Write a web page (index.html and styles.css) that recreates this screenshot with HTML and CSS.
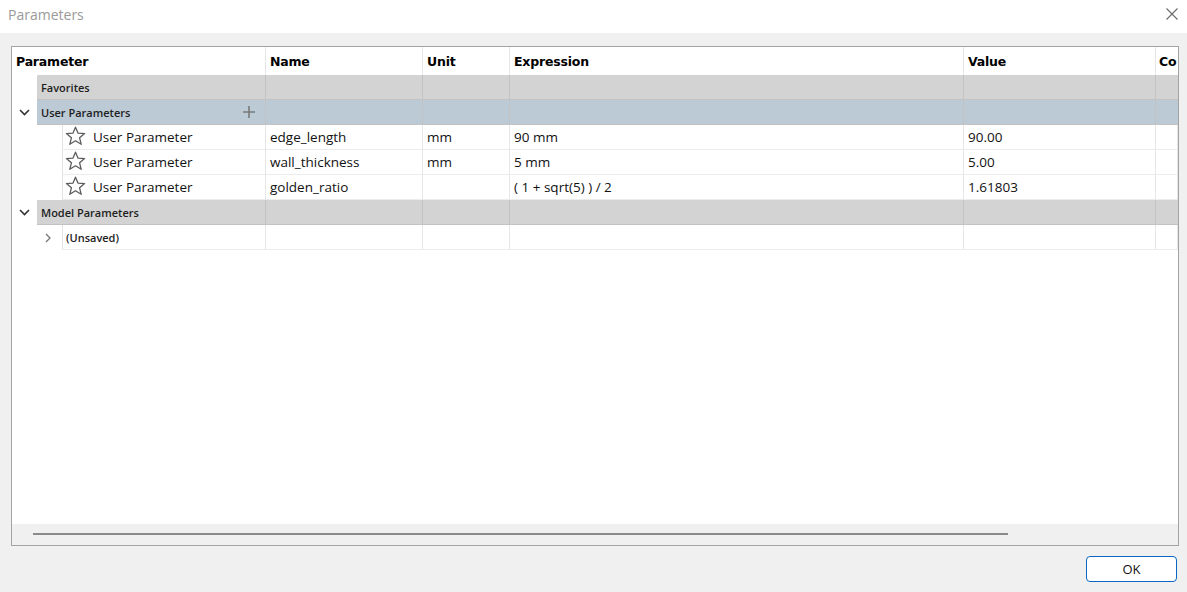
FILE: index.html
```html
<!DOCTYPE html>
<html>
<head>
<meta charset="utf-8">
<title>Parameters</title>
<link rel="stylesheet" href="styles.css">
</head>
<body>
<div class="dialog">
  <div class="titlebar">
    <span class="title">Parameters</span>
    <svg class="close" width="12" height="12" viewBox="0 0 12 12"><path d="M0.5 0.5 L11.5 11.5 M11.5 0.5 L0.5 11.5" stroke="#6a6a6a" stroke-width="1.1" fill="none"/></svg>
  </div>
  <div class="content">
    <div class="frame">
      <div class="viewport">
        <div class="row header">
          <div class="cell first">Parameter</div>
          <div class="cell">Name</div>
          <div class="cell">Unit</div>
          <div class="cell">Expression</div>
          <div class="cell">Value</div>
          <div class="cell clip">Co</div>
        </div>

        <div class="row group gray">
          <div class="cell first tree"><span class="gutter g1"></span><span class="label">Favorites</span></div>
          <div class="cell"></div><div class="cell"></div><div class="cell"></div><div class="cell"></div><div class="cell"></div>
        </div>

        <div class="row group blue">
          <div class="cell first tree"><span class="gutter g1"><svg class="chev" width="11" height="7" viewBox="0 0 11 7"><path d="M1 1 L5.5 5.5 L10 1" stroke="#333" stroke-width="1.6" fill="none"/></svg></span><span class="label">User Parameters<svg class="plus" width="12" height="12" viewBox="0 0 12 12"><path d="M6 0 V12 M0 6 H12" stroke="#7a7a7a" stroke-width="1.6"/></svg></span></div>
          <div class="cell"></div><div class="cell"></div><div class="cell"></div><div class="cell"></div><div class="cell"></div>
        </div>

        <div class="row data">
          <div class="cell first tree"><span class="gutter g2"></span><span class="label child"><svg class="star" width="21" height="20" viewBox="0 0 21 20"><path d="M10.5 1.2 L13.1 7.2 L19.6 7.6 L14.6 11.8 L16.2 18.3 L10.5 14.8 L4.8 18.3 L6.4 11.8 L1.4 7.6 L7.9 7.2 Z" stroke="#5c5c5c" stroke-width="1.3" fill="none" stroke-linejoin="round"/></svg>User Parameter</span></div>
          <div class="cell">edge_length</div>
          <div class="cell">mm</div>
          <div class="cell">90 mm</div>
          <div class="cell">90.00</div>
          <div class="cell"></div>
        </div>

        <div class="row data">
          <div class="cell first tree"><span class="gutter g2"></span><span class="label child"><svg class="star" width="21" height="20" viewBox="0 0 21 20"><path d="M10.5 1.2 L13.1 7.2 L19.6 7.6 L14.6 11.8 L16.2 18.3 L10.5 14.8 L4.8 18.3 L6.4 11.8 L1.4 7.6 L7.9 7.2 Z" stroke="#5c5c5c" stroke-width="1.3" fill="none" stroke-linejoin="round"/></svg>User Parameter</span></div>
          <div class="cell">wall_thickness</div>
          <div class="cell">mm</div>
          <div class="cell">5 mm</div>
          <div class="cell">5.00</div>
          <div class="cell"></div>
        </div>

        <div class="row data">
          <div class="cell first tree"><span class="gutter g2"></span><span class="label child"><svg class="star" width="21" height="20" viewBox="0 0 21 20"><path d="M10.5 1.2 L13.1 7.2 L19.6 7.6 L14.6 11.8 L16.2 18.3 L10.5 14.8 L4.8 18.3 L6.4 11.8 L1.4 7.6 L7.9 7.2 Z" stroke="#5c5c5c" stroke-width="1.3" fill="none" stroke-linejoin="round"/></svg>User Parameter</span></div>
          <div class="cell">golden_ratio</div>
          <div class="cell"></div>
          <div class="cell">( 1 + sqrt(5) ) / 2</div>
          <div class="cell">1.61803</div>
          <div class="cell"></div>
        </div>

        <div class="row group gray">
          <div class="cell first tree"><span class="gutter g1"><svg class="chev" width="11" height="7" viewBox="0 0 11 7"><path d="M1 1 L5.5 5.5 L10 1" stroke="#333" stroke-width="1.6" fill="none"/></svg></span><span class="label">Model Parameters</span></div>
          <div class="cell"></div><div class="cell"></div><div class="cell"></div><div class="cell"></div><div class="cell"></div>
        </div>

        <div class="row data">
          <div class="cell first tree"><span class="gutter g2 right"><svg class="chev-r" width="6" height="10" viewBox="0 0 6 10"><path d="M1 1 L5 5 L1 9" stroke="#777" stroke-width="1.3" fill="none"/></svg></span><span class="label child small">(Unsaved)</span></div>
          <div class="cell"></div>
          <div class="cell"></div>
          <div class="cell"></div>
          <div class="cell"></div>
          <div class="cell"></div>
        </div>
      </div>
      <div class="hscroll"><div class="thumb"></div></div>
    </div>
  </div>
  <div class="footer">
    <button class="ok">OK</button>
  </div>
</div>
</body>
</html>
```

FILE: styles.css
```css
html, body {
  margin: 0;
  padding: 0;
}
body {
  width: 1187px;
  height: 592px;
  background: #f0f0f0;
  font-family: "Open Sans", "Noto Sans", sans-serif;
  overflow: hidden;
}
.dialog {
  display: flex;
  flex-direction: column;
  height: 592px;
}
.titlebar {
  height: 33px;
  background: #ffffff;
  display: flex;
  align-items: center;
  justify-content: space-between;
  padding: 0 9px 5px 8px;
  box-sizing: border-box;
}
.title {
  font-size: 14px;
  color: #9a9a9a;
}
.content {
  padding: 13px 8px 0 11px;
}
.frame {
  border: 1px solid #a3a3a3;
  height: 498px;
  display: flex;
  flex-direction: column;
  background: #f0f0f0;
}
.viewport {
  height: 477px;
  background: #ffffff;
  overflow: hidden;
}
.hscroll {
  height: 21px;
  display: flex;
  align-items: center;
  padding-left: 21px;
  padding-bottom: 1px;
  box-sizing: border-box;
}
.thumb {
  width: 975px;
  height: 2px;
  background: #8a8a8a;
}
.row {
  display: grid;
  grid-template-columns: 254px 157px 87px 454px 192px 22px;
  height: 25px;
}
.cell {
  border-right: 1px solid #e6e6e6;
  border-bottom: 1px solid #ececec;
  padding-left: 4px;
  display: flex;
  align-items: center;
  font-size: 13.5px;
  color: #111;
  white-space: nowrap;
  overflow: hidden;
}
.row.header {
  height: 28px;
}
.header .cell {
  font-family: "DejaVu Sans", sans-serif;
  font-weight: bold;
  font-size: 12.5px;
  letter-spacing: -0.2px;
  color: #000;
  padding-left: 4px;
  border-bottom: none;
  padding-top: 1px;
}
.cell.clip {
  border-right: none;
  padding-left: 3px;
}
.cell.tree {
  padding-left: 0;
  border-bottom: none;
  align-items: stretch;
}
.gutter {
  flex: none;
  display: flex;
  align-items: center;
  background: #ffffff;
}
.gutter.g1 {
  width: 25px;
  padding-left: 7px;
  box-sizing: border-box;
}
.gutter.g2 {
  width: 50px;
}
.gutter.right {
  padding-left: 33px;
  box-sizing: border-box;
}
.label {
  flex: 1;
  display: flex;
  align-items: center;
  padding-left: 4px;
  border-bottom: 1px solid #ececec;
}
.group .label {
  font-weight: 600;
  font-size: 11px;
  color: #1e1e1e;
  justify-content: space-between;
  padding-right: 10px;
}
.group .cell {
  border-right-color: #c3c3c3;
  border-bottom-color: #c3c3c3;
}
.group .label {
  border-bottom-color: #c3c3c3;
}
.group.gray .cell:not(.first),
.group.gray .label {
  background: #d3d3d3;
}
.group.blue .cell:not(.first),
.group.blue .label {
  background: #bccad5;
}
.group .cell:last-child {
  border-right: none;
}
.label.child {
  border-left: 1px solid #e3e3e3;
  padding-left: 2px;
}
.star {
  margin-right: 7px;
  margin-top: -2px;
}
.label.small {
  font-weight: 600;
  font-size: 11px;
  padding-left: 3px;
  color: #1e1e1e;
}
.chev-r {
  display: block;
}
.footer {
  display: flex;
  justify-content: flex-end;
  padding: 10px 10px 0 0;
}
.ok {
  width: 91px;
  height: 26px;
  border: 1px solid #0a66c2;
  border-radius: 4px;
  background: #ffffff;
  font-family: "Open Sans", sans-serif;
  font-size: 13px;
  color: #111;
  padding: 0;
}
```
